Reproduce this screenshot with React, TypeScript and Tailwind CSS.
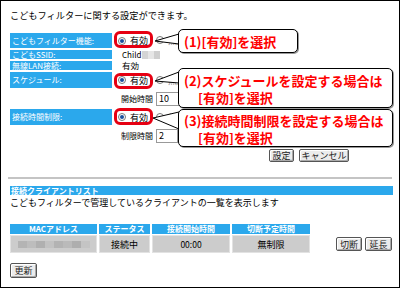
const blue = "bg-[#2ba8ec]";

const Radio = ({ on }: { on?: boolean }) => (
  <span className="inline-flex h-[8px] w-[8px] items-center justify-center rounded-full border border-[#7a7a7a] bg-white">
    {on && <span className="h-[4px] w-[4px] rounded-full bg-[#1a4f9c]" />}
  </span>
);

const Btn = ({ label, w }: { label: string; w: string }) => (
  <div
    className={`flex items-center justify-center rounded-[2px] border border-[#555] bg-[#ececec] text-[9px] leading-none text-[#222] shadow-[inset_1px_1px_0_#fff,inset_-1px_-1px_0_#aaa] ${w}`}
  >
    {label}
  </div>
);

const Label = ({ text, h, on = true }: { text: string; h: string; on?: boolean }) => (
  <div className={`flex items-center pl-[2px] text-[8px] leading-none text-white ${on ? blue : ""} ${h}`}>{text}</div>
);

const Callout = ({ box, children }: { box: string; children: React.ReactNode }) => (
  <div
    className={`absolute rounded-[5px] border border-black bg-white font-bold text-[13px] leading-[17px] text-[#ff0000] shadow-[1px_1px_0_#999] ${box}`}
  >
    {children}
  </div>
);

const App = () => {
  return (
    <div
      className="relative h-[288px] w-[400px] overflow-hidden border border-black bg-white text-black"
      style={{ fontFamily: '"Noto Sans CJK JP", "Noto Sans", sans-serif' }}
    >
      <div className="pl-[9px] pt-[8px]">
        <div className="flex h-[14px] items-center text-[9.2px] leading-none">こどもフィルターに関する設定ができます。</div>

        <div className="mt-[10px] grid grid-cols-[102px_1fr] gap-x-[2px] gap-y-[2px]">
          <Label text="こどもフィルター機能:" h="h-[15px]" />
          <div className="flex items-center gap-[4px] pl-[4px] text-[9px] leading-none">
            <Radio on />
            <span>有効</span>
            <span className="ml-[4px]"><Radio /></span>
            <span className="text-[#888]">無効</span>
          </div>

          <Label text="こどもSSID:" h="h-[9px]" />
          <div className="flex items-center pl-[8px] text-[8px] leading-none">
            <span>Child</span>
            <span className="ml-[1px] h-[8px] w-[6px] bg-[#d4d4d4]" />
            <span className="h-[8px] w-[6px] bg-[#e6e6e6]" />
            <span className="h-[8px] w-[6px] bg-[#cfcfcf]" />
          </div>

          <Label text="無線LAN接続:" h="h-[9px]" />
          <div className="flex items-center pl-[8px] text-[8.5px] leading-none">有効</div>

          <Label text="スケジュール:" h="h-[16px]" />
          <div className="flex items-center gap-[4px] pl-[4px] text-[9px] leading-none">
            <Radio on />
            <span>有効</span>
            <span className="ml-[4px]"><Radio /></span>
            <span className="text-[#888]">無効</span>
          </div>

          <Label text="" h="h-[17px]" on={false} />
          <div className="flex items-center gap-[3px] pl-[4px] text-[8px] leading-none">
            <span className="w-[35px] text-right">開始時間</span>
            <span className="flex h-[14px] w-[24px] items-center border border-[#999] pl-[2px] text-[9px]">10</span>
          </div>

          <Label text="接続時間制限:" h="h-[16px]" />
          <div className="flex items-center gap-[4px] pl-[4px] text-[9px] leading-none">
            <Radio on />
            <span>有効</span>
            <span className="ml-[4px]"><Radio /></span>
            <span className="text-[#888]">無効</span>
          </div>

          <Label text="" h="h-[17px]" on={false} />
          <div className="flex items-center gap-[3px] pl-[4px] text-[8px] leading-none">
            <span className="w-[35px] text-right">制限時間</span>
            <span className="flex h-[14px] w-[22px] items-center border border-[#999] pl-[2px] text-[9px]">2</span>
          </div>
        </div>

        <div className="mt-[5px] flex h-[13px] gap-[5px] pl-[259px]">
          <Btn label="設定" w="w-[25px]" />
          <Btn label="キャンセル" w="w-[50px]" />
        </div>
      </div>

      <div className="mx-[7px] mt-[15px] h-[2px] bg-[#c4c4c4]" />

      <div className="pl-[9px] pr-[6px]">
        <div className={`mt-[7px] flex h-[9px] items-center pl-[1px] text-[8px] font-bold leading-none text-white ${blue}`}>
          接続クライアントリスト
        </div>
        <div className="mt-[2px] flex h-[10px] items-center text-[9px] leading-none">
          こどもフィルターで管理しているクライアントの一覧を表示します
        </div>

        <div className="mt-[17px] flex items-start">
          <div className="grid grid-cols-[87px_51px_78px_78px] gap-x-[2px] gap-y-[1px]">
            {["MACアドレス", "ステータス", "接続開始時間", "切断予定時間"].map((h) => (
              <div key={h} className={`flex h-[10px] items-center justify-center text-[8px] font-bold leading-none text-white ${blue}`}>
                {h}
              </div>
            ))}
            <div className="flex h-[18px] items-center justify-center gap-0 border border-[#e2e2e2] bg-[#cccccc]">
              <span className="h-[7px] w-[9px] bg-[#b4b4b4]" />
              <span className="h-[7px] w-[9px] bg-[#bdbdbd]" />
              <span className="h-[7px] w-[9px] bg-[#b0b0b0]" />
              <span className="h-[7px] w-[9px] bg-[#c2c2c2]" />
              <span className="h-[7px] w-[9px] bg-[#b3b3b3]" />
              <span className="h-[7px] w-[9px] bg-[#bababa]" />
              <span className="h-[7px] w-[9px] bg-[#aeaeae]" />
              <span className="h-[7px] w-[9px] bg-[#c4c4c4]" />
            </div>
            <div className="flex h-[18px] items-center justify-center border border-[#e2e2e2] bg-[#cccccc] text-[9px] leading-none">接続中</div>
            <div className="flex h-[18px] items-center justify-center border border-[#e2e2e2] bg-[#cccccc] text-[8.5px] leading-none">00:00</div>
            <div className="flex h-[18px] items-center justify-center border border-[#e2e2e2] bg-[#cccccc] text-[9px] leading-none">無制限</div>
          </div>
          <div className="ml-[26px] mt-[13px] flex h-[14px] gap-[3px]">
            <Btn label="切断" w="w-[26px]" />
            <Btn label="延長" w="w-[27px]" />
          </div>
        </div>

        <div className="mt-[10px] flex h-[15px]">
          <Btn label="更新" w="w-[27px]" />
        </div>
      </div>

      {/* red highlights */}
      <div className="absolute left-[113px] top-[30px] h-[17px] w-[39px] rounded-[6px] border-[3px] border-[#e60012]" />
      <div className="absolute left-[113px] top-[72px] h-[16px] w-[39px] rounded-[6px] border-[3px] border-[#e60012]" />
      <div className="absolute left-[113px] top-[107px] h-[17px] w-[39px] rounded-[6px] border-[3px] border-[#e60012]" />

      {/* callout tails */}
      <svg className="absolute left-0 top-0" width="400" height="288">
        <polygon points="178,33 154,40 178,43" fill="white" stroke="black" strokeWidth="1" />
        <polygon points="178,71 154,80 178,82" fill="white" stroke="black" strokeWidth="1" />
        <polygon points="178,111 152,117 178,128" fill="white" stroke="black" strokeWidth="1" />
      </svg>

      <Callout box="left-[177px] top-[28px] h-[24px] w-[120px] flex items-center pl-[5px]">(1)[有効]を選択</Callout>
      <Callout box="left-[177px] top-[67px] h-[40px] w-[215px] pl-[5px] pt-[3px]">
        <div>(2)スケジュールを設定する場合は</div>
        <div className="pl-[14px]">[有効]を選択</div>
      </Callout>
      <Callout box="left-[177px] top-[108px] h-[38px] w-[215px] pl-[5px] pt-[2px]">
        <div>(3)接続時間制限を設定する場合は</div>
        <div className="pl-[14px]">[有効]を選択</div>
      </Callout>
    </div>
  );
};

export default App;
